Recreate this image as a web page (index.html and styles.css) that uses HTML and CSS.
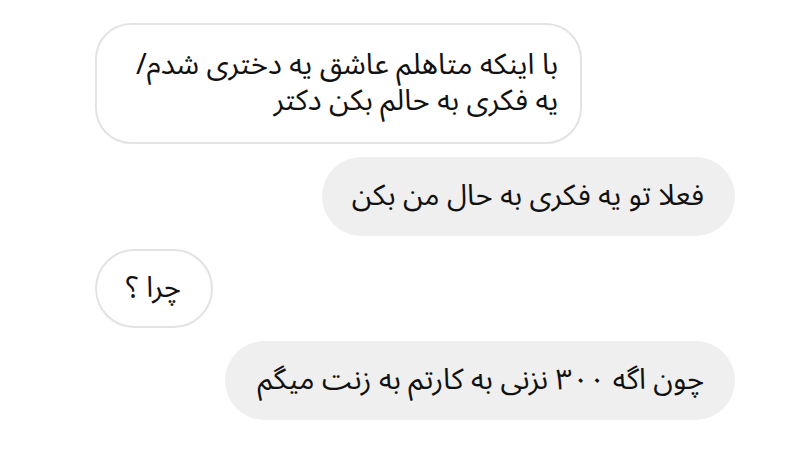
FILE: index.html
```html
<!DOCTYPE html>
<html lang="fa">
  <head>
    <meta charset="UTF-8" />
    <meta name="viewport" content="width=device-width, initial-scale=1.0" />
    <title>Chat</title>
    <link rel="stylesheet" href="styles.css">
  </head>

  <body>
    <div class="chat">
      <div class="msg incoming" dir="rtl">با اینکه متاهلم عاشق یه دختری شدم/<br />یه فکری به حالم بکن دکتر</div>
      <div class="msg outgoing" dir="rtl">فعلا تو یه فکری به حال من بکن</div>
      <div class="msg incoming short" dir="rtl">چرا ؟</div>
      <div class="msg outgoing long" dir="rtl">چون اگه ۳۰۰ نزنی به کارتم به زنت میگم</div>
    </div>
  </body>
</html>
```

FILE: styles.css
```css
body {
  margin: 0;
  background: #ffffff;
  font-family: "Noto Sans Arabic", "DejaVu Sans", sans-serif;
  color: #111;
}

.chat {
  display: flex;
  flex-direction: column;
  gap: 13px;
  padding: 23px 65px 0 95px;
}

.msg {
  font-size: 29px;
  line-height: 36px;
  white-space: nowrap;
  border-radius: 40px;
  text-align: right;
}

.incoming {
  align-self: flex-start;
  background: #fff;
  border: 2px solid #e3e3e3;
  padding: 22px 22px 23px 39px;
  border-radius: 36px;
}

.incoming.short {
  padding: 19px 30px 20px 29px;
  border-radius: 40px;
}

.outgoing {
  align-self: flex-end;
  background: #efefef;
  padding: 21px 31px 22px 30px;
}

.outgoing.long {
  padding-left: 33px;
}
```
